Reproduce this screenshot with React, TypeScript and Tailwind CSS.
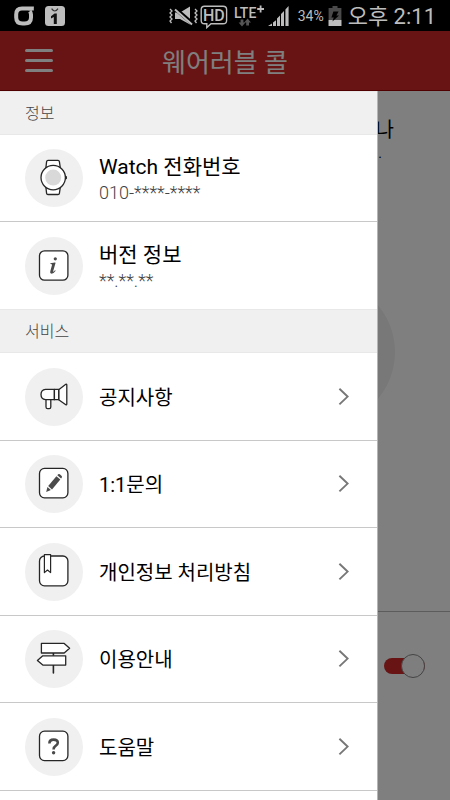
import type { ReactNode } from 'react';

const LINE = {
  fill: '#fff',
  stroke: '#262626',
  strokeWidth: 1.3,
  strokeLinejoin: 'round',
  strokeLinecap: 'round',
} as const;

function WatchIcon() {
  return (
    <svg viewBox="0 0 58 58" className="size-full" aria-hidden="true" {...LINE}>
      <path d="M20.8 19.5 L21.6 12.6 Q21.8 11.3 23 11.3 H33 Q34.2 11.3 34.4 12.6 L35.4 19.5 Z" />
      <path d="M20.8 37.5 L21.6 44.3 Q21.8 45.5 23 45.5 H33 Q34.2 45.5 34.4 44.3 L35.4 37.5 Z" />
      <path d="M40.4 27.2 L41.3 27.8 V29.4 L40.4 30 Z" fill="#262626" />
      <circle cx="28.2" cy="28.6" r="12.2" />
      <circle cx="28.2" cy="28.6" r="8" fill="#d9d9d9" stroke="none" />
    </svg>
  );
}

function InfoIcon() {
  return (
    <svg viewBox="0 0 58 58" className="size-full" aria-hidden="true" {...LINE}>
      <rect x="14.5" y="13.8" width="28.4" height="29.4" rx="5" />
      <g fill="#4a4a4a" stroke="none">
        <circle cx="30.3" cy="21.8" r="1.6" />
        <path d="M25.4 26.3 L29.9 25.4 L30.6 25.7 L28.2 34 Q28 35 28.8 34.5 L30 33.3 L30.7 33.8 Q28.6 36.8 26.5 36.8 Q24.6 36.6 25.3 34.3 L27 27.9 Q27.2 27 25.4 27.1 Z" />
      </g>
    </svg>
  );
}

function MegaphoneIcon() {
  return (
    <svg viewBox="0 0 58 58" className="size-full" aria-hidden="true" {...LINE}>
      <path d="M21 31 V39 Q21 40.7 22.6 40.7 H24.2 Q25.8 40.7 25.8 39 V31 Z" />
      <path d="M33.7 21.8 L40.8 16.3 Q41.8 15.8 41.8 17 V36 Q41.8 37.3 40.8 36.7 L33.7 31.7 Z" />
      <path d="M29.4 21.4 H20.5 Q16 21.8 16 26.5 Q16 31.2 20.5 31.7 H29.4 Z" />
      <path d="M29.4 21.4 H33.7 V31.7 H29.4 Z" />
    </svg>
  );
}

function PencilIcon() {
  return (
    <svg viewBox="0 0 58 58" className="size-full" aria-hidden="true" {...LINE}>
      <rect x="14.5" y="13.4" width="28.4" height="29.4" rx="5" />
      <g fill="#4a4a4a" stroke="none">
        <path d="M31.4 21.2 L35.3 24.6 L27 34.4 L23.2 31 Z" />
        <path d="M32.3 20.2 L33.2 19.2 Q34 18.6 34.8 19.3 L36.7 21 Q37.3 21.7 36.8 22.6 L36.1 23.6 Z" />
        <path d="M22.4 32 L25.9 35.1 L21.2 36.9 Z" />
      </g>
    </svg>
  );
}

function BookIcon() {
  return (
    <svg viewBox="0 0 58 58" className="size-full" aria-hidden="true" {...LINE}>
      <rect x="14.5" y="13" width="28.4" height="29.8" rx="5" />
      <path d="M19.4 11.6 H25.6 V29.6 L22.5 27 L19.4 29.6 Z" strokeWidth="1.2" />
    </svg>
  );
}

function SignpostIcon() {
  return (
    <svg viewBox="0 0 58 58" className="size-full" aria-hidden="true" {...LINE}>
      <path d="M28.4 23 V43" strokeWidth="1.6" />
      <path d="M16.4 13.4 H39.2 L44.6 18.3 L39.2 23 H16.4 Z" />
      <path d="M40.7 25.8 H17.8 L12.4 30.4 L17.8 35.1 H40.7 Z" />
    </svg>
  );
}

function HelpIcon() {
  return (
    <svg viewBox="0 0 58 58" className="size-full" aria-hidden="true" {...LINE}>
      <rect x="14.5" y="13.2" width="28.4" height="29.4" rx="5" />
      <path d="M24.4 25.4 Q24.4 21.6 28.6 21.6 Q32.8 21.6 32.8 24.8 Q32.8 26.6 30.6 27.8 Q28.6 29 28.6 31.6" fill="none" stroke="#4a4a4a" strokeWidth="2.6" strokeLinecap="butt" />
      <circle cx="28.6" cy="34.8" r="1.7" fill="#4a4a4a" stroke="none" />
    </svg>
  );
}

const info = [
  { title: 'Watch 전화번호', value: '010-****-****', icon: <WatchIcon /> },
  { title: '버전 정보', value: '**.**.**', icon: <InfoIcon /> },
];

const services = [
  { title: '공지사항', icon: <MegaphoneIcon /> },
  { title: '1:1문의', icon: <PencilIcon /> },
  { title: '개인정보 처리방침', icon: <BookIcon /> },
  { title: '이용안내', icon: <SignpostIcon /> },
  { title: '도움말', icon: <HelpIcon /> },
];

function StatusBar() {
  return (
    <div className="flex h-[31px] items-center justify-between bg-black px-3.5 text-[#bdbdbd]">
      <div className="flex items-center gap-[11px]">
        <svg viewBox="0 0 20 20" className="size-5" aria-hidden="true">
          <path d="M19.8 2.6 H8 Q2.2 2.6 2.2 8.6 V11.4 Q2.2 17.4 8.6 17.4 H10.6 Q17 17.4 17 11.4 V8.6 Q17 6.6 15.8 5.2" fill="none" stroke="currentColor" strokeWidth="4" />
          <path d="M14 4.4 Q19.6 4.6 19.8 .2 V2 Z" fill="currentColor" />
        </svg>
        <svg viewBox="0 0 20 20" className="size-5" aria-hidden="true">
          <rect width="20" height="20" rx="3.5" fill="currentColor" />
          <path d="M6.6 2.6 Q9.8 7.4 13 2.6" fill="none" stroke="#333" strokeWidth="1.2" />
          <path d="M6 10.2 L9.6 7.4 H11.8 V18 H8.8 V11 L6 12.6 Z" fill="#111" />
        </svg>
      </div>

      <div className="flex items-center">
        <svg viewBox="0 0 30 20" className="h-5 w-[30px]" fill="none" stroke="currentColor" aria-hidden="true">
          <path d="M1 3 L3 5 L1 7 L3 9 L1 11 L3 13 L1 15 L2.5 17" strokeWidth="1.3" />
          <path d="M26 3 L28 5 L26 7 L28 9 L26 11 L28 13 L26 15 L27.5 17" strokeWidth="1.3" />
          <path d="M6 6.5 H11 L21 .5 V18.5 L11 13 H6 Z" fill="currentColor" stroke="none" />
          <path d="M5.5 2 L24 18" stroke="#000" strokeWidth="4" />
          <path d="M6 3.5 L23 18.5" strokeWidth="2" />
        </svg>
        <svg viewBox="0 0 28 24" className="mt-0.5 ml-px h-6 w-7" aria-hidden="true">
          <path d="M4.5 1.2 H23 Q26.6 1.2 26.6 4.6 V15.4 Q26.6 18.8 23 18.8 H11 L6.8 22.6 V18.8 H4.5 Q1.2 18.8 1.2 15.4 V4.6 Q1.2 1.2 4.5 1.2 Z" fill="none" stroke="currentColor" strokeWidth="1.4" />
          <text x="13.9" y="16" textAnchor="middle" fill="currentColor" className="font-[Roboto] text-[16px] font-medium">HD</text>
        </svg>
        <svg viewBox="0 0 34 24" className="mt-px ml-1 h-6 w-[34px]" aria-hidden="true">
          <text x="2" y="14" fill="currentColor" className="font-[Roboto] text-[14px] font-medium">LTE</text>
          <path d="M28.6 1.6 V8.6 M25.2 5 H32" stroke="currentColor" strokeWidth="1.8" />
          <path d="M10 22.4 L6.6 18.6 H8.6 V15.4 H11.4 V18.6 H13.4 Z M15.6 14.6 L19 18.4 H17 V21.6 H14.2 V18.4 H12.2 Z" fill="#555" />
        </svg>
        <svg viewBox="0 0 22 22" className="ml-0.5 size-[22px]" fill="currentColor" aria-hidden="true">
          <path d="M0 21 L4 18.6 V21 Z M5 17.6 L8 15.2 V21 H5 Z M9 13.6 L12 10.6 V21 H9 Z M13 9 L16 6 V21 H13 Z M17.4 4.6 L20.6 1 V21 H17.4 Z" />
        </svg>
        <span className="mt-px ml-2 font-[Roboto] text-sm">34%</span>
        <svg viewBox="0 0 14 20" className="ml-1 h-5 w-3.5" aria-hidden="true">
          <path d="M4.5 0 H9.5 V2 H13.4 V20 H.6 V2 H4.5 Z" fill="#4a4a4a" />
          <path d="M.6 14 H13.4 V20 H.6 Z" fill="currentColor" />
          <path d="M5.4 5.6 H10.6 L8.4 9.4 H11 L4.4 15.6 L5.8 11.4 H3.4 Z" fill="#000" />
        </svg>
        <time className="mt-0.5 ml-1.5 font-[Roboto,'Noto_Sans_CJK_KR',sans-serif] text-[22px] whitespace-pre">오후 2:11</time>
      </div>
    </div>
  );
}

function SectionHeader({ children }: { children: ReactNode }) {
  return (
    <h2 className="flex h-11 items-center border-y border-[#e8e8e8] bg-[#f0f0f0] pt-0.5 pl-[25px] text-base font-light text-[#444]">
      {children}
    </h2>
  );
}

function IconCircle({ children }: { children: ReactNode }) {
  return <span className="size-[58px] shrink-0 rounded-full bg-[#f0f0f0]">{children}</span>;
}

function Drawer() {
  return (
    <aside className="absolute top-[60px] bottom-0 left-0 w-[84%] overflow-hidden border-r border-[#b5b5b5] bg-white">
      <SectionHeader>정보</SectionHeader>
      <ul>
        {info.map((item) => (
          <li key={item.title} className="flex h-[87px] items-center gap-4 border-b border-[#c8c8c8] pl-[25px] last:border-b-0">
            <IconCircle>{item.icon}</IconCircle>
            <div className="pt-0.5">
              <p className="text-[21px] leading-7 text-black">{item.title}</p>
              <p className="text-lg leading-6 font-light text-[#444]">{item.value}</p>
            </div>
          </li>
        ))}
      </ul>

      <SectionHeader>서비스</SectionHeader>
      <nav>
        <ul>
          {services.map((item) => (
            <li key={item.title} className="border-b border-[#c8c8c8] odd:h-[88px] even:h-[87px]">
              <a href="#" className="flex h-full items-center gap-4 pr-7 pl-[25px] text-xl text-black">
                <IconCircle>{item.icon}</IconCircle>
                <span className="flex-1 pt-0.5">{item.title}</span>
                <svg viewBox="0 0 11 18" className="h-[18px] w-[11px]" fill="none" stroke="#777" strokeWidth="1.9" aria-hidden="true">
                  <path d="M1.4 .8 L9.6 8.6 L1.4 16.4" />
                </svg>
              </a>
            </li>
          ))}
        </ul>
      </nav>
    </aside>
  );
}

export default function App() {
  return (
    <div className="flex min-h-screen flex-col bg-white font-[Roboto,'Noto_Sans_CJK_KR',sans-serif]">
      <StatusBar />
      <div className="relative flex-1 overflow-hidden">
        <header className="grid h-[60px] grid-cols-[1fr_auto_1fr] items-center border-b border-[#a00000] bg-[#d02828] px-[25px] text-white">
          <button type="button" aria-label="메뉴" className="flex w-7 flex-col gap-[7px]">
            <span className="h-[3px] rounded-full bg-white" />
            <span className="h-[3px] rounded-full bg-white" />
            <span className="h-[3px] rounded-full bg-white" />
          </button>
          <h1 className="pt-1.5 text-[26px] font-normal">웨어러블 콜</h1>
        </header>

        <main>
          <div className="pt-6 pr-14 text-right text-black">
            <p className="text-xl leading-[30px]">나</p>
            <p className="pr-3 text-sm leading-4">.</p>
          </div>
          <div className="mt-[118px] mr-[55px] ml-auto size-[146px] rounded-full bg-[#f0f0f0]" />
          <div className="mt-[186px] flex justify-end border-t border-[#b8b8b8] pt-[42px] pr-[25px]">
            <label className="relative flex h-6 w-[41px] items-center">
              <input type="checkbox" defaultChecked aria-label="웨어러블 콜" className="peer sr-only" />
              <span className="h-4 w-full rounded-full bg-gray-400 peer-checked:bg-[#d02828]" />
              <span className="absolute right-0 size-6 rounded-full border border-[#888] bg-[#fdfdfd]" />
            </label>
          </div>
        </main>

        <div className="absolute inset-0 bg-black/50" />
        <Drawer />
      </div>
    </div>
  );
}
